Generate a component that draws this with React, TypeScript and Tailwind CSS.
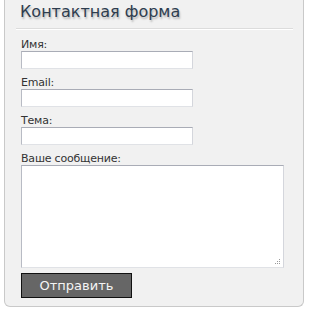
import React from "react";

const labelCls =
  "block h-[13px] text-[11px] leading-[13px] text-[#333333] tracking-[-0.2px]";
const inputCls =
  "block h-[18px] w-[172px] bg-white border border-t-[#a9acb6] border-l-[#b8bbc4] border-r-[#d4d6dc] border-b-[#e0e2e6] outline-none";

export default function App() {
  return (
    <div
      className="w-[309px] h-[312px] bg-white"
      style={{ fontFamily: '"DejaVu Sans", Verdana, sans-serif' }}
    >
      <div className="ml-[4px] w-[300px] h-[307px] bg-[#f1f1f1] border-l border-r border-b border-[#c9c9c9] rounded-b-[6px] flex flex-col">
        <div className="pl-[15px] pt-[1px] h-[24px] text-[16px] leading-[22px] text-[#2e3d4f] [text-shadow:1px_2px_2px_rgba(0,0,0,0.25)]">
          Контактная форма
        </div>
        <div className="ml-[11px] mt-[4px] w-[277px] h-[2px] border-t border-[#dcdcdc] border-b border-b-white" />
        <div className="pl-[16px] pt-[8px] flex flex-col">
          <label className={labelCls}>Имя:</label>
          <input className={inputCls} />
          <label className={labelCls + " mt-[7px]"}>Email:</label>
          <input className={inputCls} />
          <label className={labelCls + " mt-[7px]"}>Тема:</label>
          <input className={inputCls} />
          <label className={labelCls + " mt-[7px]"}>Ваше сообщение:</label>
          <div className="relative w-[263px] h-[103px]">
            <textarea className="block w-full h-full resize-none bg-white border border-t-[#a9acb6] border-l-[#b8bbc4] border-r-[#d4d6dc] border-b-[#e0e2e6] outline-none" />
            <svg
              className="absolute right-[3px] bottom-[3px]"
              width="7"
              height="7"
              viewBox="0 0 7 7"
            >
              <rect x="5" y="1" width="1" height="1" fill="#9a9a9a" />
              <rect x="3" y="3" width="1" height="1" fill="#9a9a9a" />
              <rect x="5" y="3" width="1" height="1" fill="#9a9a9a" />
              <rect x="1" y="5" width="1" height="1" fill="#9a9a9a" />
              <rect x="3" y="5" width="1" height="1" fill="#9a9a9a" />
              <rect x="5" y="5" width="1" height="1" fill="#9a9a9a" />
            </svg>
          </div>
          <button className="mt-[5px] w-[111px] h-[25px] bg-[#666666] border border-[#111111] text-[13px] leading-[23px] text-[#f4f4f4] text-center">
            Отправить
          </button>
        </div>
      </div>
    </div>
  );
}
